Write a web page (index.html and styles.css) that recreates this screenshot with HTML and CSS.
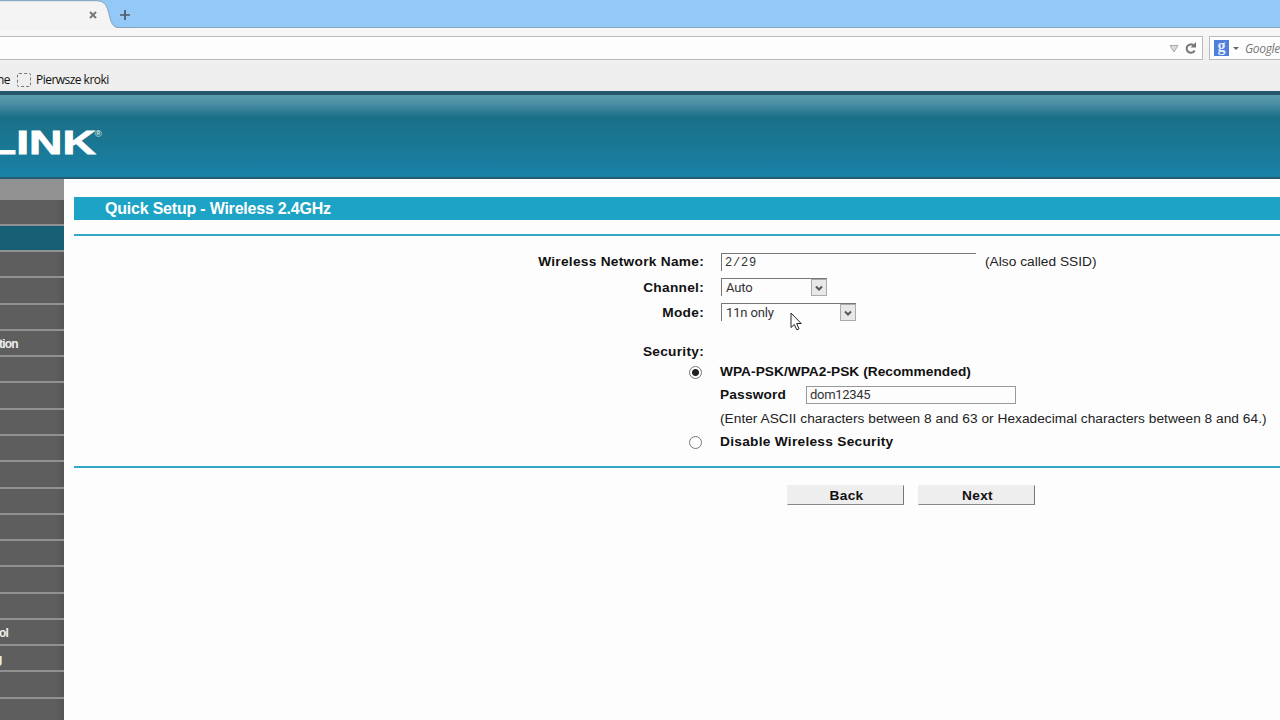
FILE: index.html
```html
<!DOCTYPE html>
<html lang="pl">
<head>
  <meta charset="UTF-8">
  <title>Quick Setup - Wireless 2.4GHz</title>
  <link rel="stylesheet" href="styles.css">
</head>
<body>
  <!-- Browser chrome -->
  <div class="tabs">
    <svg class="tab" width="140" height="30" viewBox="0 0 140 30">
      <path d="M0 1H97C105 1 107 6 109 14C111 23 113 28 119 28H140V30H0Z" fill="#f4f4f4"/>
      <path d="M0 .7H97C105 1 107 6 109 14C111 23 113 27.5 119 27.5H140" fill="none" stroke="#88a4bd"/>
      <path d="M90 12L96 18M96 12L90 18" stroke="#777" stroke-width="2"/>
      <path d="M125 10V20M120 15H130" stroke="#4d5a67" stroke-width="1.7"/>
    </svg>
  </div>
  <div class="toolbar">
    <div class="url">
      <svg width="34" height="20" viewBox="0 0 34 20">
        <path d="M2 7.5H10L6 14Z" fill="#ddd" stroke="#aaa"/>
        <path d="M25.5 7.3A4.2 4.2 0 1 0 26.6 12.5" fill="none" stroke="#777" stroke-width="2"/>
        <path d="M22.5 9.5H28V4Z" fill="#777"/>
      </svg>
    </div>
    <div class="search">
      <span class="google">g</span>
      <span class="arrow"></span>
      <span class="engine">Google</span>
    </div>
  </div>
  <div class="bookmarks">
    <span class="bm-left">ne</span>
    <span class="bm-icon"></span>
    <span class="bm-text">Pierwsze kroki</span>
  </div>

  <div class="header">
    <span class="logo">LINK</span><span class="reg">®</span>
  </div>

  <div class="page">
    <ul class="menu">
      <li></li>
      <li class="active"></li>
      <li></li>
      <li></li>
      <li></li>
      <li><span class="m1">tion</span></li>
      <li></li>
      <li></li>
      <li></li>
      <li></li>
      <li></li>
      <li></li>
      <li></li>
      <li></li>
      <li></li>
      <li></li>
      <li><span class="m2">ol</span></li>
      <li><span class="m3">g</span></li>
      <li></li>
      <li></li>
    </ul>
    <div class="content">
      <h1>Quick Setup - Wireless 2.4GHz</h1>
      <form class="setup">
        <div class="row">
          <label class="name">Wireless Network Name:</label>
          <div class="field ssid">2/29</div>
          <span class="note">(Also called SSID)</span>
        </div>
        <div class="row">
          <label class="name">Channel:</label>
          <div class="field select channel"><span>Auto</span><i class="drop"><svg width="16" height="17" viewBox="0 0 16 17"><path d="M5 7.5L8 10.5L11 7.5" fill="none" stroke="#555" stroke-width="2"/></svg></i></div>
        </div>
        <div class="row">
          <label class="name">Mode:</label>
          <div class="field select mode"><span>11n only</span><i class="drop"><svg width="16" height="17" viewBox="0 0 16 17"><path d="M5 7.5L8 10.5L11 7.5" fill="none" stroke="#555" stroke-width="2"/></svg></i></div>
        </div>
        <div class="row security">
          <label class="name">Security:</label>
        </div>
        <div class="row wpa">
          <div class="radio"><i class="on"></i></div>
          <b class="wpa-label">WPA-PSK/WPA2-PSK (Recommended)</b>
        </div>
        <div class="row pass">
          <div class="radio"></div>
          <b class="pass-label">Password</b>
          <div class="password">dom12345</div>
        </div>
        <div class="row hint">
          <div class="radio"></div>
          <span class="note">(Enter ASCII characters between 8 and 63 or Hexadecimal characters between 8 and 64.)</span>
        </div>
        <div class="row disable">
          <div class="radio"><i></i></div>
          <b>Disable Wireless Security</b>
        </div>
      </form>
      <div class="buttons">
        <button type="button">Back</button>
        <button type="button">Next</button>
      </div>
    </div>
  </div>

  <svg class="cursor" width="13" height="20" viewBox="0 0 13 20">
    <path d="M1 1V15.5L4.3 12.5L6.8 17.8L9 16.8L6.6 11.5H11.2Z" fill="#fff" stroke="#222"/>
  </svg>
</body>
</html>
```
FILE: styles.css
```css
* { box-sizing: border-box; }
body {
  margin: 0;
  width: 1280px;
  height: 720px;
  overflow: hidden;
  background: #fdfdfd;
  font-family: "Liberation Sans", Arial, sans-serif;
  color: #222;
  white-space: nowrap;
}
svg { display: block; }

/* Browser chrome */
.tabs {
  height: 28px;
  background: #94c8f7;
  border-bottom: 1px solid #88a4bd;
}
.toolbar {
  height: 37px;
  padding: 8px 0 5px;
  display: flex;
  gap: 6px;
  background: linear-gradient(#f7f7f7, #efefef);
}
.url {
  width: 1203px;
  height: 24px;
  border: 1px solid #bbb;
  border-left: 0;
  background: #fdfdfd;
  display: flex;
  justify-content: flex-end;
  align-items: center;
}
.search {
  flex: 1;
  height: 24px;
  border: 1px solid #bbb;
  border-right: 0;
  background: #fdfdfd;
  display: flex;
  align-items: center;
  padding-left: 4px;
}
.google {
  width: 15px;
  height: 16px;
  background: #527edb;
  color: #e4edff;
  font: bold 16px/12px "Liberation Serif", serif;
  text-align: center;
}
.arrow {
  border: 3px solid transparent;
  border-top-color: #666;
  margin: 3px 6px 0 4px;
}
.engine {
  font: italic 12px "Open Sans", sans-serif;
  letter-spacing: -0.3px;
  color: #777;
}
.bookmarks {
  height: 26px;
  background: #eee;
  display: flex;
  align-items: center;
  padding-top: 3px;
  font: 12px "Open Sans", sans-serif;
  letter-spacing: -0.53px;
  color: #111;
}
.bm-left { width: 18px; margin-left: -3px; }
.bm-icon {
  width: 14px;
  height: 14px;
  border: 1px dashed #777;
  border-radius: 2px;
  margin: 0 5px 0 2px;
}

/* Router header */
.header {
  height: 88px;
  border-top: 4px solid #25566b;
  border-bottom: 2px solid #245c70;
  background: linear-gradient(#5a9aae 0, #4d8fa5 8px, #1b7088 22px, #1a7590 42px, #1982a8 82px);
  display: flex;
  padding-top: 28px;
  color: #fff;
}
.logo {
  width: 107px;
  margin-left: -12px;
  font-weight: bold;
  font-size: 33px;
  line-height: 39px;
  -webkit-text-stroke: 0.8px #fff;
  transform: scaleX(1.4);
  transform-origin: left;
}
.reg {
  font-size: 9px;
  line-height: 22px;
}

/* Left menu */
.page { display: flex; }
.menu {
  width: 64px;
  height: 541px;
  margin: 0;
  padding: 20.6px 0 0;
  list-style: none;
  background: #919191;
  overflow: hidden;
}
.menu li {
  height: 26.27px;
  border-bottom: 2px solid #919191;
  background: linear-gradient(90deg, #5e5e5e 56px, #555);
  color: #eee;
  font: bold 12px/26px "Liberation Sans", sans-serif;
  letter-spacing: -0.8px;
}
.menu li.active { background: #165f74; }
.m1, .m2 { margin-left: -1px; }
.m3 { margin-left: -5px; }

/* Setup form */
.content {
  flex: 1;
  padding: 18px 0 0 10px;
}
h1 {
  height: 23px;
  margin: 0 0 14px;
  padding-left: 31px;
  background: #1ca3c5;
  color: #fff;
  font-size: 16px;
  letter-spacing: -0.21px;
  line-height: 23px;
}
.setup {
  height: 234px;
  padding-top: 14px;
  border-top: 2px solid #35a8c6;
  border-bottom: 2px solid #35a8c6;
}
.row {
  display: flex;
  height: 25.6px;
  font-size: 14px;
  line-height: 24px;
}
.name {
  width: 630px;
  margin-right: 17px;
  text-align: right;
  font-weight: bold;
}
.name, b {
  color: #111;
  font-size: 13.7px;
  line-height: 24px;
  letter-spacing: 0.28px;
}
.note {
  font-size: 13.7px;
  letter-spacing: 0.03px;
}
.field {
  height: 18px;
  margin-top: 3px;
  border-top: 1px solid #777;
  border-left: 1px solid #777;
  padding-left: 4px;
  font: 13px/18px Roboto, sans-serif;
  color: #333;
}
.ssid {
  width: 255px;
  margin-right: 9px;
  padding-left: 3px;
  font: 12px/18px "Liberation Mono", monospace;
  letter-spacing: 0.8px;
}
.select {
  display: flex;
  justify-content: space-between;
  margin-top: 2px;
  line-height: 18px;
  letter-spacing: -0.15px;
}
.channel { width: 106px; }
.mode { width: 135px; }
.drop {
  width: 16px;
  height: 17px;
  border: 1px solid #aaa;
  background: #e8e8e8;
}
.drop svg { margin: -1px; }
.security { height: 20px; margin-top: 13px; }
.radio {
  width: 646px;
  padding: 6px 18px 0 0;
  display: flex;
  justify-content: flex-end;
}
.radio i {
  width: 13px;
  height: 13px;
  border: 1px solid #777;
  border-radius: 50%;
  background: #fff;
}
.radio i.on {
  background: radial-gradient(#222 3px, #fff 4px);
}
.wpa, .pass, .hint { height: 23.4px; }
.wpa .wpa-label { letter-spacing: 0.04px; }
.pass .pass-label { width: 66px; line-height: 23px; letter-spacing: 0.18px; }
.password {
  width: 210px;
  height: 18px;
  margin: 3px 0 0 20px;
  padding-left: 3px;
  border: 1px solid #999;
  font: 13px/16px Roboto, sans-serif;
  letter-spacing: -0.3px;
  color: #333;
}
.buttons {
  display: flex;
  gap: 14px;
  padding: 17px 0 0 713px;
}
.buttons button {
  width: 117px;
  height: 20px;
  padding: 0 0 0 2px;
  border: 1px solid #eee;
  border-right-color: #777;
  border-bottom-color: #888;
  background: #eee;
  color: #111;
  font: bold 13.7px "Liberation Sans", sans-serif;
  letter-spacing: 0.3px;
}

.cursor {
  position: absolute;
  left: 790px;
  top: 312px;
}
```
